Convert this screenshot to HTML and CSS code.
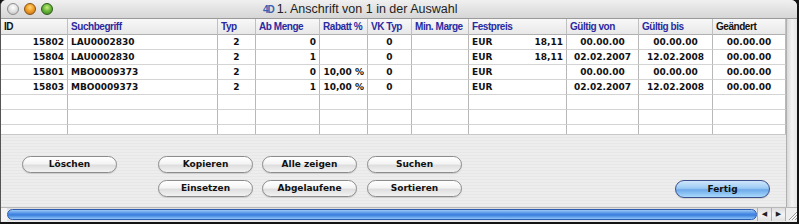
FILE: index.html
```html
<!DOCTYPE html>
<html>
<head>
<meta charset="utf-8">
<link rel="stylesheet" href="styles.css">
</head>
<body>
<div class="window">
  <div class="titlebar">
    <div class="lights">
      <span class="light gray"></span>
      <span class="light orange"></span>
      <span class="light green"></span>
    </div>
    <div class="title"><span class="logo">4D</span>1. Anschrift von 1 in der Auswahl</div>
  </div>
  <div class="main">
    <div class="form">
      <div class="list">
        <div class="h black">ID</div>
        <div class="h">Suchbegriff</div>
        <div class="h">Typ</div>
        <div class="h">Ab Menge</div>
        <div class="h">Rabatt %</div>
        <div class="h">VK Typ</div>
        <div class="h">Min. Marge</div>
        <div class="h">Festpreis</div>
        <div class="h">Gültig von</div>
        <div class="h">Gültig bis</div>
        <div class="h black">Geändert</div>

        <div class="c r">15802</div><div class="c">LAU0002830</div><div class="c m">2</div><div class="c r">0</div><div class="c r"></div><div class="c m">0</div><div class="c"></div><div class="c sp"><span>EUR</span><span>18,11</span></div><div class="c m">00.00.00</div><div class="c m">00.00.00</div><div class="c m">00.00.00</div>

        <div class="c r">15804</div><div class="c">LAU0002830</div><div class="c m">2</div><div class="c r">1</div><div class="c r"></div><div class="c m">0</div><div class="c"></div><div class="c sp"><span>EUR</span><span>18,11</span></div><div class="c m">02.02.2007</div><div class="c m">12.02.2008</div><div class="c m">00.00.00</div>

        <div class="c r">15801</div><div class="c">MBO0009373</div><div class="c m">2</div><div class="c r">0</div><div class="c r">10,00 %</div><div class="c m">0</div><div class="c"></div><div class="c sp"><span>EUR</span><span></span></div><div class="c m">00.00.00</div><div class="c m">00.00.00</div><div class="c m">00.00.00</div>

        <div class="c r">15803</div><div class="c">MBO0009373</div><div class="c m">2</div><div class="c r">1</div><div class="c r">10,00 %</div><div class="c m">0</div><div class="c"></div><div class="c sp"><span>EUR</span><span></span></div><div class="c m">02.02.2007</div><div class="c m">12.02.2008</div><div class="c m">00.00.00</div>

        <div class="c"></div><div class="c"></div><div class="c"></div><div class="c"></div><div class="c"></div><div class="c"></div><div class="c"></div><div class="c"></div><div class="c"></div><div class="c"></div><div class="c"></div>
        <div class="c"></div><div class="c"></div><div class="c"></div><div class="c"></div><div class="c"></div><div class="c"></div><div class="c"></div><div class="c"></div><div class="c"></div><div class="c"></div><div class="c"></div>
        <div class="c"></div><div class="c"></div><div class="c"></div><div class="c"></div><div class="c"></div><div class="c"></div><div class="c"></div><div class="c"></div><div class="c"></div><div class="c"></div><div class="c"></div>
      </div>
      <div class="buttons">
        <button class="btn b-loeschen">Löschen</button>
        <button class="btn b-kopieren">Kopieren</button>
        <button class="btn b-alle">Alle zeigen</button>
        <button class="btn b-suchen">Suchen</button>
        <button class="btn b-einsetzen">Einsetzen</button>
        <button class="btn b-abgel">Abgelaufene</button>
        <button class="btn b-sort">Sortieren</button>
        <button class="btn default b-fertig">Fertig</button>
      </div>
    </div>
    <div class="vscroll"></div>
  </div>
  <div class="hscroll">
    <div class="hpad"></div>
    <div class="thumb"></div>
    <div class="arrow">&#9664;</div>
    <div class="arrow">&#9654;</div>
    <div class="grip">
      <svg width="12" height="14" viewBox="0 0 12 14"><path d="M11 4 L3 12 M11 7 L6 12 M11 10 L9 12" stroke="#999" stroke-width="1"/><path d="M11 5 L4 12 M11 8 L7 12" stroke="#fff" stroke-width="1"/></svg>
    </div>
  </div>
</div>
</body>
</html>
```

FILE: styles.css
```css
* { box-sizing: border-box; }
html, body { margin: 0; padding: 0; }
body {
  background: #141414;
  width: 799px;
  height: 224px;
  overflow: hidden;
  font-family: "DejaVu Sans", "Liberation Sans", sans-serif;
}
.window {
  width: 797px;
  height: 222px;
  background: #ececec;
  border-radius: 6px 6px 0 0;
  border-left: 1px solid #555;
  overflow: hidden;
  display: flex;
  flex-direction: column;
}
.titlebar {
  height: 19px;
  flex: none;
  background: linear-gradient(#f0f0f0, #d6d6d6);
  border-bottom: 1px solid #9a9a9a;
  position: relative;
  display: flex;
  align-items: center;
}
.lights {
  display: flex;
  gap: 5px;
  padding-left: 6px;
}
.light {
  width: 12px;
  height: 12px;
  border-radius: 50%;
  display: block;
}
.light.gray {
  background: radial-gradient(circle at 50% 35%, #ffffff 0, #e4e4e4 45%, #b8b8b8 100%);
  border: 1px solid #8e8e8e;
}
.light.orange {
  background: radial-gradient(circle at 50% 35%, #ffd77a 0, #f0a028 45%, #b8641a 100%);
  border: 1px solid #8a5010;
}
.light.green {
  background: radial-gradient(circle at 50% 35%, #c8ee80 0, #6ab83c 45%, #3e7a20 100%);
  border: 1px solid #2e5a18;
}
.title {
  position: absolute;
  left: 262px;
  top: 1px;
  font-family: "Liberation Sans", sans-serif;
  font-size: 12.5px;
  color: #222;
  line-height: 17px;
  white-space: nowrap;
}
.logo {
  color: #3a5fb0;
  font-size: 10px;
  font-weight: bold;
  letter-spacing: -1px;
  margin-right: 3px;
}
.main {
  display: flex;
  height: 188px;
  flex: none;
}
.form {
  width: 785px;
  display: flex;
  flex-direction: column;
}
.list {
  height: 116px;
  overflow: hidden;
  display: grid;
  grid-template-columns: 67px 150px 38px 64px 48px 44px 57px 98px 72px 74px 73px;
  grid-template-rows: 16px;
  grid-auto-rows: 15px;
  background: #fff;
  font-size: 9px;
  font-weight: bold;
  color: #111;
  border-bottom: 1px solid #c8c8c8;
}
.h {
  background: linear-gradient(#f8f8f8, #e8e8e8);
  border-right: 1px solid #c0c0c0;
  border-bottom: 1px solid #b0b0b0;
  color: #2a2aa0;
  padding: 0 2px 0 3px;
  font-family: "Liberation Sans", sans-serif;
  font-size: 10px;
  letter-spacing: -0.45px;
  line-height: 15px;
  white-space: nowrap;
  overflow: hidden;
}
.h.black { color: #111; }
.c {
  border-right: 1px solid #b8b8b8;
  border-bottom: 1px solid #d4d4d4;
  padding: 0 3px;
  line-height: 14px;
  white-space: nowrap;
  overflow: hidden;
}
.c.r { text-align: right; }
.c.m { text-align: center; }
.c.sp { display: flex; justify-content: space-between; }
.buttons {
  flex: 1;
  display: grid;
  grid-template-columns: 136px 104px 105px 96px 1fr 95px;
  grid-template-rows: 17px 17px;
  row-gap: 7px;
  padding: 21px 16px 0 21px;
  background: #ededed;
  background-image: repeating-linear-gradient(#ededed 0, #ededed 2px, #e7e7e7 2px, #e7e7e7 3px);
}
.btn {
  width: 95px;
  height: 17px;
  padding: 0;
  border: 1px solid #8c8c8c;
  border-radius: 9px;
  background: linear-gradient(#ffffff 0%, #f4f4f4 45%, #dedede 55%, #f2f2f2 100%);
  font-family: "DejaVu Sans", "Liberation Sans", sans-serif;
  font-size: 9px;
  font-weight: bold;
  color: #111;
  box-shadow: 0 1px 1px rgba(0,0,0,0.12);
  line-height: 15px;
}
.btn.default {
  border-color: #3c4f8c;
  background: linear-gradient(#cfe6fb 0%, #9ccbf4 45%, #6ea9ea 55%, #a9dafc 100%);
}
.b-loeschen { grid-column: 1; grid-row: 1; }
.b-kopieren { grid-column: 2; grid-row: 1; }
.b-alle { grid-column: 3; grid-row: 1; }
.b-suchen { grid-column: 4; grid-row: 1; }
.b-einsetzen { grid-column: 2; grid-row: 2; }
.b-abgel { grid-column: 3; grid-row: 2; }
.b-sort { grid-column: 4; grid-row: 2; }
.b-fertig { grid-column: 6; grid-row: 2; height: 18px; }
.vscroll {
  width: 11px;
  background: linear-gradient(90deg, #d8d8d8, #f4f4f4 50%, #e6e6e6);
  border-left: 1px solid #b0b0b0;
}
.hscroll {
  height: 14px;
  flex: none;
  display: flex;
  background: linear-gradient(#dcdcdc, #f4f4f4 50%, #e2e2e2);
  border-top: 1px solid #b8b8b8;
}
.hpad { width: 6px; background: #f4f4f4; }
.thumb {
  width: 750px;
  margin: 1px 0;
  border-radius: 6px;
  border: 1px solid #2b5cb0;
  background: linear-gradient(#9cc8f6 0%, #4d8ee6 40%, #3a7ddc 55%, #8cc4f8 100%);
}
.arrow {
  width: 14px;
  font-size: 7px;
  line-height: 13px;
  text-align: center;
  color: #222;
  border-left: 1px solid #b0b0b0;
}
.grip {
  width: 12px;
  border-left: 1px solid #b0b0b0;
  background: #eeeeee;
}
.grip svg { display: block; }
```
